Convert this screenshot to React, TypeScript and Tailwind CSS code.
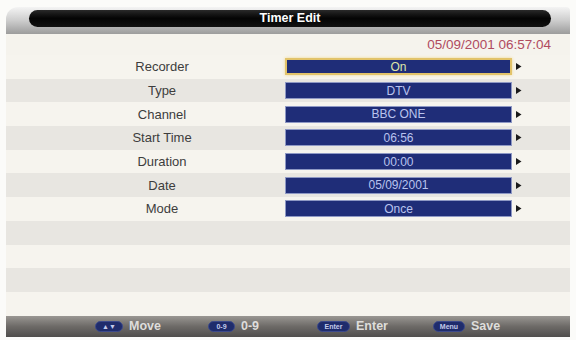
import React from "react";

interface FieldProps {
  label: string;
  value: string;
  active?: boolean;
}

const fields: FieldProps[] = [
  { label: "Recorder", value: "On", active: true },
  { label: "Type", value: "DTV" },
  { label: "Channel", value: "BBC ONE" },
  { label: "Start Time", value: "06:56" },
  { label: "Duration", value: "00:00" },
  { label: "Date", value: "05/09/2001" },
  { label: "Mode", value: "Once" },
];

// linhas vazias ate o rodape
const emptyRows = [0, 1, 2, 3];

function Arrow() {
  return (
    <svg width="6" height="7" viewBox="0 0 6 7" className="ml-[4px]">
      <path d="M0 0 L5.5 3.5 L0 7 Z" fill="#1a1a1a" />
    </svg>
  );
}

function Row({ label, value, active, index }: FieldProps & { index: number }) {
  const light = index % 2 === 0;
  return (
    <div
      className={
        "flex items-center h-[23.7px] " +
        (light ? "bg-[#f6f4ee]" : "bg-[#e8e6e1]")
      }
    >
      <div className="ml-[86px] w-[140px] text-center text-[13px] text-[#3d3d3d] leading-none">
        {label}
      </div>
      <div
        className={
          "ml-[53px] w-[227px] h-[17px] flex items-center justify-center bg-[#1f2d78] text-[12px] leading-none " +
          (active
            ? "border-2 border-[#e2c36a] shadow-[0_0_3px_#f0d890] text-[#dfe4a8]"
            : "border border-[#8e98c4] text-[#b9c3ee]")
        }
      >
        {value}
      </div>
      <Arrow />
    </div>
  );
}

function FooterKey({
  keyText,
  label,
  width,
  pill,
}: {
  keyText: string;
  label: string;
  width: string;
  pill: string;
}) {
  return (
    <div className={"flex items-center gap-[6px] " + width}>
      <span
        className={
          "h-[11px] rounded-full bg-[#1f2c6c] border border-[#3c4a8c] text-[7px] leading-none text-[#c3cbea] flex items-center justify-center font-bold " +
          pill
        }
      >
        {keyText}
      </span>
      <span className="text-[12.5px] font-bold leading-none text-[#dedddb]">{label}</span>
    </div>
  );
}

export default function App() {
  return (
    <div
      className="w-[576px] h-[340px] bg-[#fbfbf9] overflow-hidden pl-[6px] pt-[7px]"
      style={{ fontFamily: '"Liberation Sans", Arial, sans-serif' }}
    >
      <div className="w-[564px] flex flex-col">
        {/* cabecalho prateado com a barra preta */}
        <div className="h-[27px] rounded-tl-[12px] rounded-tr-[4px] bg-gradient-to-b from-[#f4f4f4] via-[#cdcdcd] to-[#9c9c9c] pl-[23px] pt-[3px]">
          <div className="w-[522px] h-[17px] rounded-full bg-gradient-to-b from-[#2a2a2a] via-[#050505] to-[#111] flex items-center justify-center">
            <span className="text-white text-[12.5px] font-bold leading-none">Timer Edit</span>
          </div>
        </div>

        <div className="h-[21px] bg-[#f5f3ed] flex items-center justify-end pr-[19px]">
          <span className="text-[13.5px] leading-none text-[#b04a60]">05/09/2001 06:57:04</span>
        </div>

        {fields.map((f, i) => (
          <Row key={f.label} {...f} index={i} />
        ))}
        {emptyRows.map((r) => (
          <div
            key={r}
            className={
              "h-[23.7px] " + ((fields.length + r) % 2 === 0 ? "bg-[#f6f4ee]" : "bg-[#e8e6e1]")
            }
          />
        ))}

        {/* rodape com as teclas */}
        <div className="h-[21px] bg-gradient-to-b from-[#9a9793] via-[#6d6a67] to-[#4f4d4b] flex items-center pl-[89px]">
          <FooterKey keyText="▲▼" label="Move" width="w-[113px]" pill="w-[28px]" />
          <FooterKey keyText="0-9" label="0-9" width="w-[109px]" pill="w-[27px]" />
          <FooterKey keyText="Enter" label="Enter" width="w-[116px]" pill="w-[33px]" />
          <FooterKey keyText="Menu" label="Save" width="w-[100px]" pill="w-[32px]" />
        </div>
      </div>
    </div>
  );
}
